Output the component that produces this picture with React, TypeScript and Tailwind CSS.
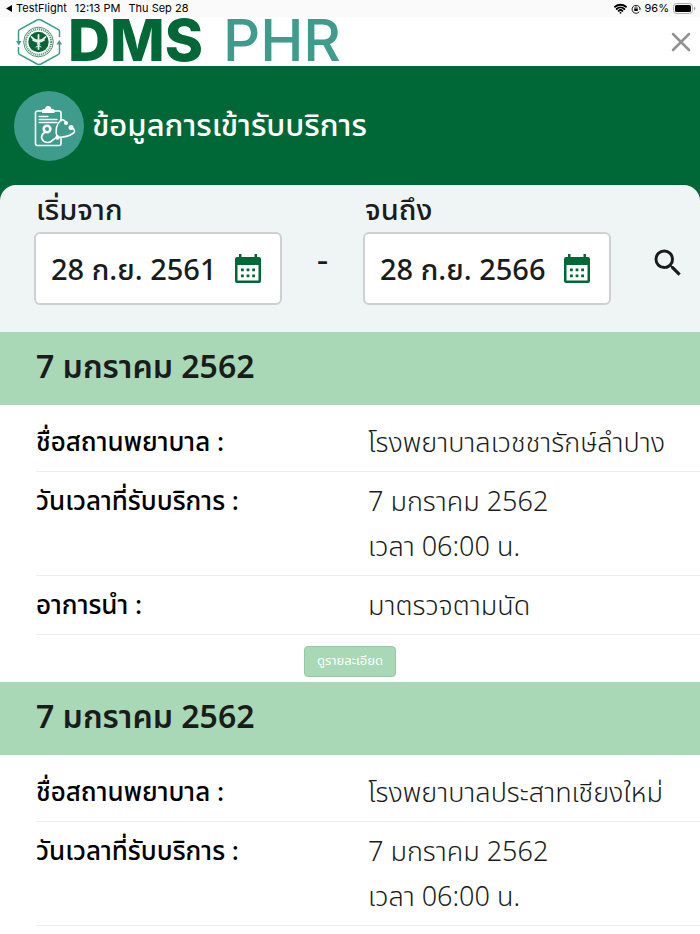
import { Wifi } from "lucide-react"
import { MdSearch } from "react-icons/md"

type Row = { label: string; lines: string[] }
type Visit = { id: number; date: string; rows: Row[]; hasDetail: boolean }

const visits: Visit[] = [
  {
    id: 1,
    date: "7 มกราคม 2562",
    rows: [
      { label: "ชื่อสถานพยาบาล :", lines: ["โรงพยาบาลเวชชารักษ์ลำปาง"] },
      { label: "วันเวลาที่รับบริการ :", lines: ["7 มกราคม 2562", "เวลา 06:00 น."] },
      { label: "อาการนำ :", lines: ["มาตรวจตามนัด"] },
    ],
    hasDetail: true,
  },
  {
    id: 2,
    date: "7 มกราคม 2562",
    rows: [
      { label: "ชื่อสถานพยาบาล :", lines: ["โรงพยาบาลประสาทเชียงใหม่"] },
      { label: "วันเวลาที่รับบริการ :", lines: ["7 มกราคม 2562", "เวลา 06:00 น."] },
    ],
    hasDetail: false,
  },
]

function StatusBar() {
  return (
    <div className="flex h-[17px] items-center justify-between bg-[#fafafa] pl-1.5 pr-1 font-['Inter',sans-serif] text-[11px] leading-none text-black">
      <div className="flex items-center gap-2">
        <span className="flex items-center gap-1">
          <svg width="6" height="7" viewBox="0 0 6 7" aria-hidden="true">
            <path d="M6 0v7L0 3.5z" />
          </svg>
          TestFlight
        </span>
        <span>12:13 PM</span>
        <span>Thu Sep 28</span>
      </div>
      <div className="flex items-center gap-1">
        <Wifi size={13} strokeWidth={3.5} />
        <svg width="10" height="10" viewBox="0 0 20 20" fill="none" stroke="currentColor" strokeWidth="1.8" aria-hidden="true">
          <path d="M16.500 15.500A8 8 0 1 1 18 9" />
          <path d="M15.500 9h4.500l-2 3.500z" fill="currentColor" stroke="none" />
          <rect x="6.500" y="9" width="7" height="5" fill="currentColor" stroke="none" />
          <path d="M8 9V7q0-1.500 2-1.500T12 7v2" strokeWidth="1.400" />
        </svg>
        <span>96%</span>
        <svg width="23" height="11" viewBox="0 0 23 11" aria-hidden="true">
          <rect x="0.500" y="0.500" width="19" height="10" rx="3" fill="none" stroke="#aaa" />
          <rect x="2" y="2" width="16" height="7" rx="1.500" />
          <path d="M21 3.500v4q1.500-.5 1.500-2t-1.500-2z" fill="#aaa" />
        </svg>
      </div>
    </div>
  )
}

function Emblem() {
  return (
    <svg className="shrink-0" width="46" height="48" viewBox="0 0 46 48" fill="none" aria-hidden="true">
      <g stroke="#3f9b8b" strokeWidth="1.500">
        <path d="M2.500 24V13.500q0-1.200 1-1.800L21 2q2-1 4 0l17.500 9.700q1 .6 1 1.800V19" />
        <path d="M43.500 25v9.500q0 1.200-1 1.800L25 46q-2 1-4 0L3.500 36.300q-1-.6-1-1.800V29" />
      </g>
      <path d="M0 23h5.500l-2.700 4.500zM40.500 26.500H46l-2.700-4.500z" fill="#3f9b8b" />
      <circle cx="22.500" cy="24" r="14.800" stroke="#26734c" strokeWidth="0.800" />
      <circle cx="22.500" cy="24" r="12.700" stroke="#5b957a" strokeWidth="2" strokeDasharray="1.200 0.800" />
      <circle cx="22.500" cy="24" r="10.200" fill="#0b6338" />
      <g stroke="#e8f3ec" strokeLinecap="round">
        <path d="M22.500 17v14" strokeWidth="1.800" />
        <path d="M15.500 19q3 3.500 7 3.500t7-3.500M17 22q3 2 5.500 2t5.500-2" strokeWidth="1.700" />
        <path d="M20 29q5-1.500 3.500-3.500T20 23M25 29q-4-1-3.500-3.500" />
      </g>
    </svg>
  )
}

function ClipboardIcon() {
  return (
    <svg className="shrink-0" width="70" height="70" viewBox="0 0 70 70" fill="none" aria-hidden="true">
      <circle cx="35" cy="35" r="35" fill="#3f9b8b" />
      <g stroke="#fff" strokeLinecap="round" strokeLinejoin="round">
        <path d="M28 20h-4.500q-2 0-2 2v30.500q0 2 2 2h21.500q2 0 2-2V47.500M40 20h5q2 0 2 2V30" strokeWidth="1.600" />
        <path d="M25 25.500h9M25 28.500h18M25 31.500h18" strokeWidth="1.300" />
        <circle cx="33" cy="38" r="3.300" strokeWidth="2.600" />
        <path d="M30.500 41.500q-4 3-2.500 6.500 1.500 3.500 6 3.500c5 0 5-5 9.500-5" strokeWidth="1.700" />
        <path d="M52 32c-1-3-4-4-5.500-2.500-4 3.500-6 10.500-3 17 7 0 12-1.500 16-4.500 2-1.500 1-4-1.500-5" strokeWidth="1.600" />
      </g>
      <path d="M28 22v-2.500q0-1.500 1.500-1.500h1.500q.5-3 3.200-3t3.300 3H39q1.500 0 1.500 1.500V22z" fill="#fff" />
      <circle cx="52" cy="32" r="2" fill="#fff" />
      <circle cx="57" cy="36.500" r="2.500" fill="#fff" />
      <circle cx="43.500" cy="46.500" r="2.200" fill="#fff" />
    </svg>
  )
}

function CalendarIcon() {
  return (
    <svg width="28" height="30" viewBox="0 0 28 30" aria-hidden="true">
      <path
        d="M5 0h2.500v3h13V0H23v3h2q2 0 2 2v22q0 2-2 2H3q-2 0-2-2V5q0-2 2-2h2zM3.500 11v15.500h21V11z"
        fill="#006837"
        fillRule="evenodd"
      />
      <path
        d="M7 14.500h2.800v2.800H7zM12.600 14.500h2.800v2.800h-2.800zM18.200 14.500H21v2.800h-2.800zM7 20.500h2.800v2.800H7zM12.600 20.500h2.800v2.800h-2.800zM18.200 20.500H21v2.800h-2.800z"
        fill="#006837"
      />
    </svg>
  )
}

function DateField({ id, label, value }: { id: string; label: string; value: string }) {
  return (
    <div className="w-[248px]">
      <label htmlFor={id} className="block h-[47px] px-0.5 text-[29px] leading-[52px] font-medium">
        {label}
      </label>
      <div className="flex h-[73px] items-center rounded-md border-2 border-[#cdd1d2] bg-white pl-[15px] pr-[18px]">
        <input id={id} type="text" defaultValue={value} className="h-12 w-0 min-w-0 flex-1 pt-1 text-[29px] font-medium outline-none" />
        <button type="button" aria-label={label}>
          <CalendarIcon />
        </button>
      </div>
    </div>
  )
}

function VisitCard({ visit }: { visit: Visit }) {
  return (
    <section>
      <h2 className="bg-[#a9d8b6] px-9 text-[32px] leading-[73px] font-semibold">{visit.date}</h2>
      <dl className="pt-2 pl-9">
        {visit.rows.map((row) => (
          <div key={row.label} className="grid grid-cols-2 border-b border-[#eeeeee] pt-2 pb-[5px] leading-[45px]">
            <dt className="text-[26px] font-medium text-black">{row.label}</dt>
            <dd className="text-[27px] font-light">
              {row.lines.map((line) => (
                <p key={line}>{line}</p>
              ))}
            </dd>
          </div>
        ))}
      </dl>
      {visit.hasDetail && (
        <div className="flex h-[47px] items-start justify-center pt-[11px]">
          <button type="button" className="h-[31px] rounded border border-[#97c8a5] bg-[#a9d8b6] px-3 text-[13px] text-white">
            ดูรายละเอียด
          </button>
        </div>
      )}
    </section>
  )
}

export default function App() {
  return (
    <div className="bg-white font-['Noto_Sans_Thai','Noto_Sans',sans-serif] text-[#1a1c1b]">
      <StatusBar />
      <header className="flex h-[49px] items-center justify-between pl-4 pr-2">
        <div className="flex items-start gap-1.5">
          <Emblem />
          <h1 className="flex gap-5 font-['Inter',sans-serif] text-[58px] leading-[44px]">
            <span className="font-extrabold text-[#006837]">DMS</span>
            <span className="font-medium text-[#3f9b8b]">PHR</span>
          </h1>
        </div>
        <button type="button" aria-label="ปิด">
          <svg width="22" height="22" viewBox="0 0 22 22" stroke="#929292" strokeWidth="2.500" strokeLinecap="round" aria-hidden="true">
            <path d="M3 3l16 16M19 3L3 19" />
          </svg>
        </button>
      </header>
      <main className="bg-[#006837]">
        <div className="flex h-[119px] items-center gap-2 px-3.5">
          <ClipboardIcon />
          <h2 className="pt-1 text-[31px] font-medium text-white">ข้อมูลการเข้ารับบริการ</h2>
        </div>
        <form className="flex h-[147px] items-start rounded-t-2xl bg-[#eff5f5] pl-[34px] pr-3.5">
          <DateField id="from" label="เริ่มจาก" value="28 ก.ย. 2561" />
          <span className="w-[81px] pt-12 text-center text-[36px] leading-[56px]">-</span>
          <DateField id="to" label="จนถึง" value="28 ก.ย. 2566" />
          <button type="button" aria-label="ค้นหา" className="mt-[60px] ml-auto">
            <MdSearch size={36} />
          </button>
        </form>
        <div className="bg-white pb-2">
          {visits.map((visit) => (
            <VisitCard key={visit.id} visit={visit} />
          ))}
        </div>
      </main>
    </div>
  )
}
